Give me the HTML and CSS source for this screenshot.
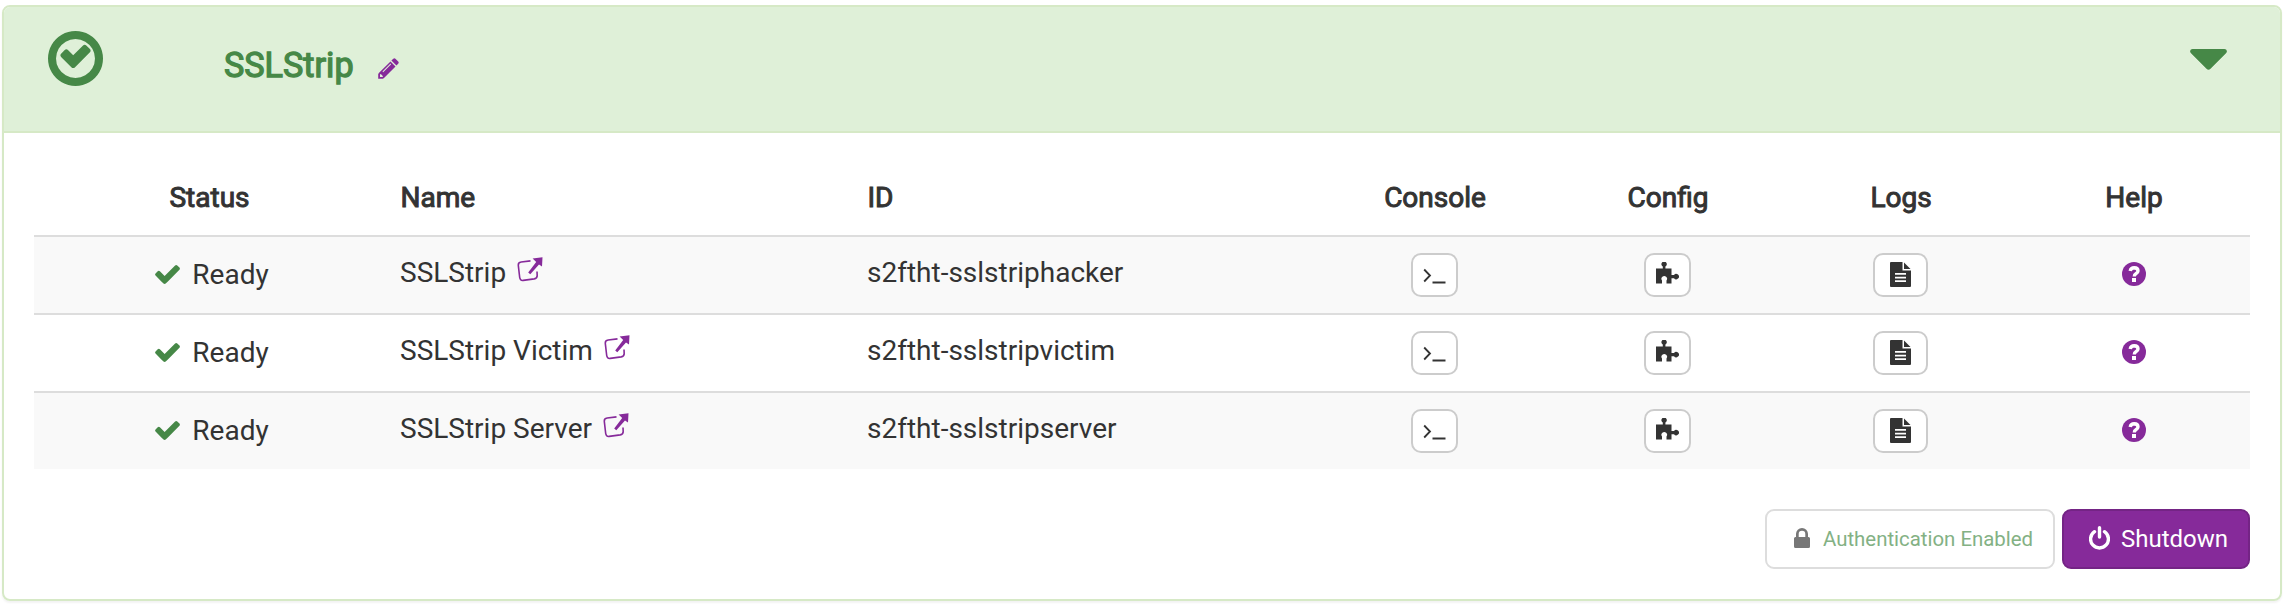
FILE: index.html
```html
<!DOCTYPE html>
<html lang="en"><head><meta charset="utf-8"><title>SSLStrip</title><link rel="stylesheet" href="styles.css"></head>
<body>
<svg class="defs" aria-hidden="true">
<symbol id="check" viewBox="121 334 1550 1188"><path d="M1671 566q0 40-28 68l-724 724-136 136q-28 28-68 28t-68-28l-136-136-362-362q-28-28-28-68t28-68l136-136q28-28 68-28t68 28l294 295 656-657q28-28 68-28t68 28l136 136q28 28 28 68z"/></symbol>
<symbol id="external" viewBox="0 0 26 25"><path d="M13.500 3.900L4.200 5Q1 5.500 1.300 8.300L2.700 20.500Q3.200 23.800 6.200 23.400L17.200 21.900Q20.300 21.400 20.200 18.500L20 14.500" fill="none" stroke="currentColor" stroke-width="1.600"/><path d="M15.600 1.500L25.500 0.300L25 9.600L22 7.600L13.300 17.200L11.200 15.500L19.200 5Z"/></symbol>
<symbol id="terminal" viewBox="0 0 23 16"><path d="M1.200 1.500L7 7.500L1.200 13.500" fill="none" stroke="currentColor" stroke-width="1.800"/><path d="M9.500 13.500H22.500V15.500H9.500Z"/></symbol>
<symbol id="puzzle" viewBox="0 0 23 22"><path d="M0 6.500H6.800V4.500A2.700 2.700 0 1 1 9.400 4.500V6.500H15.500V13H18A2.700 2.700 0 1 1 18 16.200H15.500V21.500H10.500V18.500A2.800 2.800 0 1 0 6 18.500V21.500H0Z"/></symbol>
<symbol id="file" viewBox="0 0 21 25"><path fill-rule="evenodd" d="M1 0H12.500V8.500H21V24Q21 25 20 25H1Q0 25 0 24V1Q0 0 1 0ZM5 11V12.700H16V11ZM5 14.700V16.400H16V14.700ZM5 18.300V20H16V18.300Z"/><path d="M14 0.500L20.500 7H14Z"/></symbol>
<symbol id="help" viewBox="0 0 24 24"><circle cx="12" cy="12" r="12"/><path d="M8.200 9Q8.800 5.800 12.200 5.800Q16 5.900 16 9Q16 10.500 13.900 11.700Q12.300 12.600 12.300 14.500" fill="none" stroke="#fff" stroke-width="3.400"/><path d="M10 16h4v4h-4z" fill="#fff"/></symbol>
</svg>
<section class="panel">
<header class="panel-head">
<svg class="state" viewBox="0 128 1536 1536"><path d="M1171 723L749 1145q-19 19-45 19t-45-19L365 851q-19-19-19-45t19-45l102-102q19-19 45-19t45 19l147 147 275-275q19-19 45-19t45 19l102 102q19 19 19 45t-19 45zm141 173q0-148-73-273t-198-198-273-73-273 73-198 198-73 273 73 273 198 198 273 73 273-73 198-198 73-273zm224 0q0 209-103 385.500T1153.500 1561 768 1664t-385.500-103T103 1281.500 0 896t103-385.500T382.500 231 768 128t385.500 103T1433 510.500 1536 896z"/></svg>
<h2>SSLStrip</h2>
<svg class="pencil" viewBox="0 0 21 21"><path fill-rule="evenodd" d="M13.400 2.500L15.300.700Q16.300-.200 17.400.700L20.200 3.500Q21.200 4.600 20.200 5.700L18.400 7.500ZM12.500 3.400L17.500 8.400L6.500 19.500L5 20.700H.2V16L1.300 14.500ZM2 16.500V19H4.500L5 18.200L2.800 16ZM4.500 13.500L12.500 5.500L13.200 6.200L5.200 14.200Z"/></svg>
<svg class="caret" viewBox="0 0 37 21"><path d="M2.500 0H34.500Q36.500 0 36.900 2Q37 3.200 36 4.200L20.500 19.800Q18.500 21.500 16.500 19.800L1 4.200Q0 3.200.100 2Q.500 0 2.500 0Z"/></svg>
</header>
<div class="panel-body">
<table>
<colgroup><col class="c-status"><col class="c-wide"><col class="c-wide"><col><col><col><col></colgroup>
<thead><tr><th class="mid">Status</th><th>Name</th><th>ID</th><th class="mid">Console</th><th class="mid">Config</th><th class="mid">Logs</th><th class="mid">Help</th></tr></thead>
<tbody>
<tr><td class="mid status"><svg class="ok"><use href="#check"/></svg>Ready</td><td>SSLStrip<svg class="ext"><use href="#external"/></svg></td><td>s2ftht-sslstriphacker</td><td class="mid act"><button class="btn"><svg class="term"><use href="#terminal"/></svg></button></td><td class="mid act"><button class="btn"><svg class="puz"><use href="#puzzle"/></svg></button></td><td class="mid act"><button class="btn logs"><svg class="doc"><use href="#file"/></svg></button></td><td class="mid act"><svg class="help"><use href="#help"/></svg></td></tr>
<tr><td class="mid status"><svg class="ok"><use href="#check"/></svg>Ready</td><td>SSLStrip Victim<svg class="ext"><use href="#external"/></svg></td><td>s2ftht-sslstripvictim</td><td class="mid act"><button class="btn"><svg class="term"><use href="#terminal"/></svg></button></td><td class="mid act"><button class="btn"><svg class="puz"><use href="#puzzle"/></svg></button></td><td class="mid act"><button class="btn logs"><svg class="doc"><use href="#file"/></svg></button></td><td class="mid act"><svg class="help"><use href="#help"/></svg></td></tr>
<tr><td class="mid status"><svg class="ok"><use href="#check"/></svg>Ready</td><td>SSLStrip Server<svg class="ext"><use href="#external"/></svg></td><td>s2ftht-sslstripserver</td><td class="mid act"><button class="btn"><svg class="term"><use href="#terminal"/></svg></button></td><td class="mid act"><button class="btn"><svg class="puz"><use href="#puzzle"/></svg></button></td><td class="mid act"><button class="btn logs"><svg class="doc"><use href="#file"/></svg></button></td><td class="mid act"><svg class="help"><use href="#help"/></svg></td></tr>
</tbody>
</table>
<footer>
<button class="auth"><svg class="lock" viewBox="0 0 16 20"><path fill-rule="evenodd" d="M1.500 9H2V6A6 6 0 0 1 14 6V9H14.500Q16 9 16 10.500V18.500Q16 20 14.500 20H1.500Q0 20 0 18.500V10.500Q0 9 1.500 9ZM4.700 9H11.300V6A3.300 3.300 0 0 0 4.700 6Z"/></svg>Authentication Enabled</button>
<button class="shutdown"><svg class="power" viewBox="0 0 21 24"><path d="M5.500 5.700A8.900 8.900 0 1 0 15.500 5.700" fill="none" stroke="currentColor" stroke-width="3.400" stroke-linecap="round"/><path d="M10.500 1.800V11" stroke="currentColor" stroke-width="3.400" stroke-linecap="round"/></svg>Shutdown</button>
</footer>
</div>
</section>
</body></html>
```
FILE: styles.css
```css
*{box-sizing:border-box}
body{margin:0;padding:5px 4px 5px 2px;background:#fff;color:#333;font-family:Roboto,sans-serif;font-size:28px;line-height:40px}
svg{fill:currentColor;flex:none}
.defs{display:none}
button{font-family:inherit;margin:0}
.panel{height:596px;border:2px solid #d6e9c6;border-radius:8px;box-shadow:0 2px 2px rgba(0,0,0,.05);overflow:hidden}
.panel-head{display:flex;align-items:flex-start;height:126px;background:#dff0d8;border-bottom:2px solid #d6e9c6;color:#468847;padding:0 53px 0 44px}
.state{width:55px;height:55px;margin-top:24px}
h2{width:154px;margin:38px 0 0 121px;font-size:34.2px;line-height:40px;font-weight:400;-webkit-text-stroke:1.3px currentColor}
.pencil{width:21px;height:21px;margin:51px 0 0;color:#862a9a}
.caret{width:37px;height:21px;margin:42px 0 0 auto}
.panel-body{padding:30px}
table{width:2216px;table-layout:fixed;border-collapse:separate;border-spacing:0}
.c-status{width:350px}
.c-wide{width:467px}
th{height:72px;padding:0 15.500px 0 16.500px;text-align:left;font-weight:400;vertical-align:top;line-height:70px;-webkit-text-stroke:1px currentColor}
td{height:78px;border-top:2px solid #ddd;padding:16px 16px 0;vertical-align:top}
tbody tr:nth-child(odd){background:#f9f9f9}
.mid{text-align:center}
.status{padding-top:18px;padding-left:22px}
.ok{width:25px;height:19px;color:#468847;margin-right:12px}
.ext{width:26px;height:25px;color:#862a9a;margin-left:11px}
.act{line-height:0}
.btn{display:inline-flex;align-items:center;justify-content:center;width:47px;height:44px;padding:0;background:#fff;border:2px solid #ccc;border-radius:10px;color:#333}
.logs{width:55px}
.term{width:23px;height:16px;margin-top:1px}
.puz{width:23px;height:22px;margin-bottom:4px}
.doc{width:21px;height:25px;margin-bottom:1px}
.help{width:24px;height:24px;color:#862a9a;margin-top:9px}
footer{display:flex;justify-content:flex-end;gap:7px;margin-top:40px}
.auth,.shutdown{display:flex;align-items:center;height:60px;border-radius:9px}
.auth{width:290px;background:#fff;border:2px solid #ddd;color:#83b184;font-size:20.4px;padding:0 0 0 27px}
.lock{width:16px;height:20px;color:#777;margin:0 13px 3px 0}
.shutdown{width:188px;background:#862a9a;border:2px solid #742485;color:#fff;font-size:24px;padding:0 0 0 25px}
.power{width:21px;height:24px;margin:0 11px 3px 0}
```
